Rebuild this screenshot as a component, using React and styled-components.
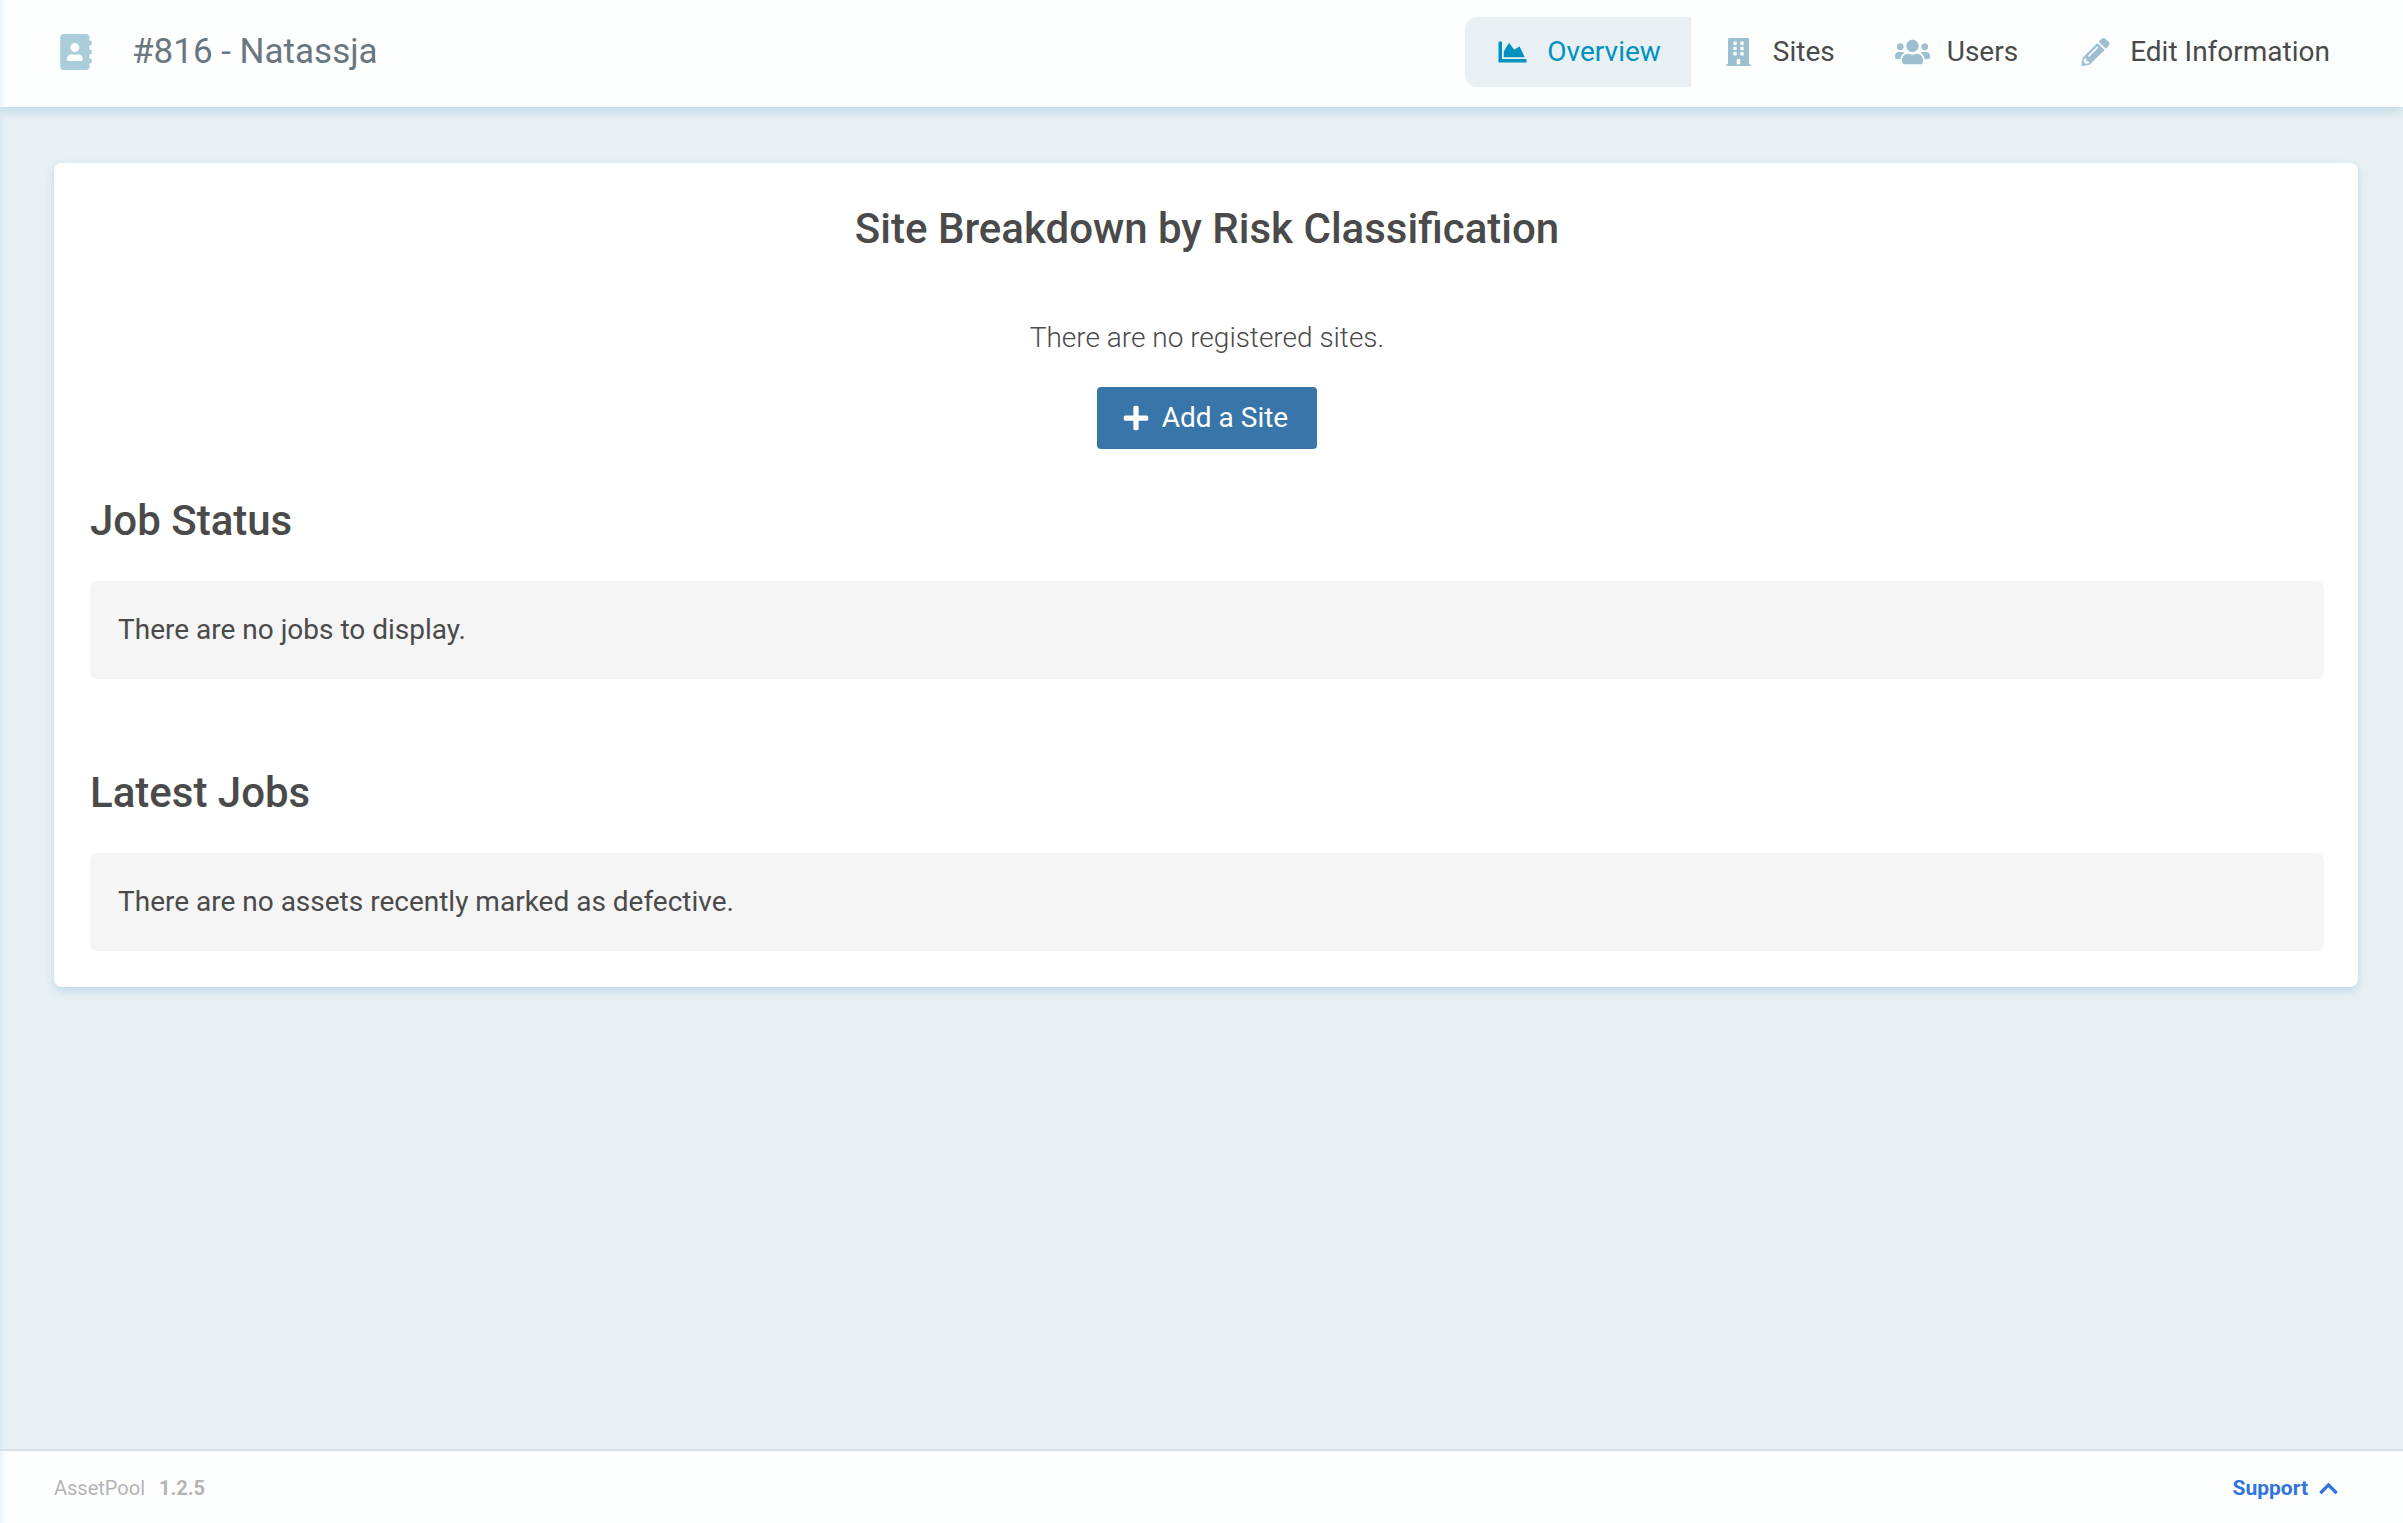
import * as React from "react"
import styled, { createGlobalStyle } from "styled-components"
import {
  FaAddressBook,
  FaBuilding,
  FaChartArea,
  FaChevronUp,
  FaPencilAlt,
  FaPlus,
  FaUsers,
} from "react-icons/fa"

const GlobalStyle = createGlobalStyle`
  *, *::before, *::after {
    box-sizing: border-box;
  }

  body {
    margin: 0;
    background: #e8f0f4;
    color: #4a4a4a;
    font-family: Roboto, sans-serif;
    font-size: 28px;
    line-height: 42px;
  }

  h1, h2, p {
    margin: 0;
  }
`

const Page = styled.div`
  position: relative;
  display: flex;
  flex-direction: column;
  min-height: 100vh;
`

const EdgeShade = styled.div`
  position: absolute;
  top: 0;
  bottom: 0;
  left: 0;
  width: 6px;
  background: linear-gradient(to right, rgba(190, 220, 240, 0.3), rgba(190, 220, 240, 0));
  pointer-events: none;
`

const Header = styled.header`
  display: flex;
  align-items: center;
  justify-content: space-between;
  padding: 17px 43px 20px 60px;
  background: #fdfefe;
  box-shadow: 0 4px 10px rgba(120, 185, 205, 0.4);
`

const Brand = styled.div`
  display: flex;
  align-items: center;
  gap: 40px;

  svg {
    color: #abccd9;
    font-size: 36px;
    width: 32px;
  }
`

const BrandName = styled.h1`
  color: #697780;
  font-size: 35px;
  font-weight: 400;
`

const Nav = styled.nav`
  display: flex;
`

const NavLink = styled.a`
  display: flex;
  align-items: center;
  gap: 17px;
  height: 70px;
  padding: 0 30px;
  border-radius: 12px 0 0 12px;
  background: ${(props) => (props.$active ? "#e8f0f4" : "transparent")};
  color: ${(props) => (props.$active ? "#0092be" : "#4a4a4a")};
  text-decoration: none;

  svg {
    width: 35px;
    color: ${(props) => (props.$active ? "#0092be" : "#9dc0d0")};
  }
`

const Main = styled.main`
  flex: 1;
  padding: 56px 45px 56px 54px;
`

const Card = styled.div`
  padding: 36px 34px 36px 36px;
  border-radius: 8px;
  background: #fff;
  box-shadow: 0 4px 10px rgba(120, 185, 205, 0.4);
`

const Section = styled.section`
  display: flex;
  flex-direction: column;
  align-items: ${(props) => (props.$centered ? "center" : "stretch")};

  & + & {
    margin-top: 84px;
  }

  &:first-child + & {
    margin-top: 42px;
  }
`

const Heading = styled.h2`
  margin-bottom: 30px;
  font-size: 42px;
  font-weight: 500;
  line-height: 60px;
`

const EmptyText = styled.p`
  margin: 28px 0;
  font-weight: 300;
`

const AddButton = styled.button`
  display: flex;
  align-items: center;
  gap: 12px;
  height: 62px;
  padding: 0 29px 0 25px;
  border: 0;
  border-radius: 4px;
  background: #3876aa;
  color: #fff;
  font: inherit;
  cursor: pointer;
`

const Notice = styled.p`
  padding: 28px;
  border-radius: 8px;
  background: #f5f5f5;
`

const Footer = styled.footer`
  display: flex;
  align-items: center;
  justify-content: space-between;
  height: 74px;
  padding: 2px 64px 0 54px;
  border-top: 2px solid #d8e2e5;
  background: #fdfefe;
  color: #b5b5b5;
  font-size: 20px;
`

const Version = styled.strong`
  margin-left: 14px;
`

const SupportButton = styled.button`
  display: flex;
  align-items: center;
  gap: 10px;
  padding: 0;
  border: 0;
  background: none;
  color: #3273dc;
  font: inherit;
  font-size: 21px;
  font-weight: 700;
  cursor: pointer;
`

const links = [
  { label: "Overview", icon: FaChartArea, active: true },
  { label: "Sites", icon: FaBuilding },
  { label: "Users", icon: FaUsers },
  { label: "Edit Information", icon: FaPencilAlt },
]

export default function App() {
  return (
    <Page>
      <GlobalStyle />
      <Header>
        <Brand>
          <FaAddressBook />
          <BrandName>#816 - Natassja</BrandName>
        </Brand>
        <Nav>
          {links.map(({ label, icon: Icon, active }) => (
            <NavLink key={label} href="#" $active={active}>
              <Icon />
              {label}
            </NavLink>
          ))}
        </Nav>
      </Header>

      <Main>
        <Card>
          <Section $centered>
            <Heading>Site Breakdown by Risk Classification</Heading>
            <EmptyText>There are no registered sites.</EmptyText>
            <AddButton type="button">
              <FaPlus />
              Add a Site
            </AddButton>
          </Section>

          <Section>
            <Heading>Job Status</Heading>
            <Notice>There are no jobs to display.</Notice>
          </Section>

          <Section>
            <Heading>Latest Jobs</Heading>
            <Notice>There are no assets recently marked as defective.</Notice>
          </Section>
        </Card>
      </Main>

      <Footer>
        <span>
          AssetPool
          <Version>1.2.5</Version>
        </span>
        <SupportButton type="button">
          Support
          <FaChevronUp />
        </SupportButton>
      </Footer>
      <EdgeShade />
    </Page>
  )
}
